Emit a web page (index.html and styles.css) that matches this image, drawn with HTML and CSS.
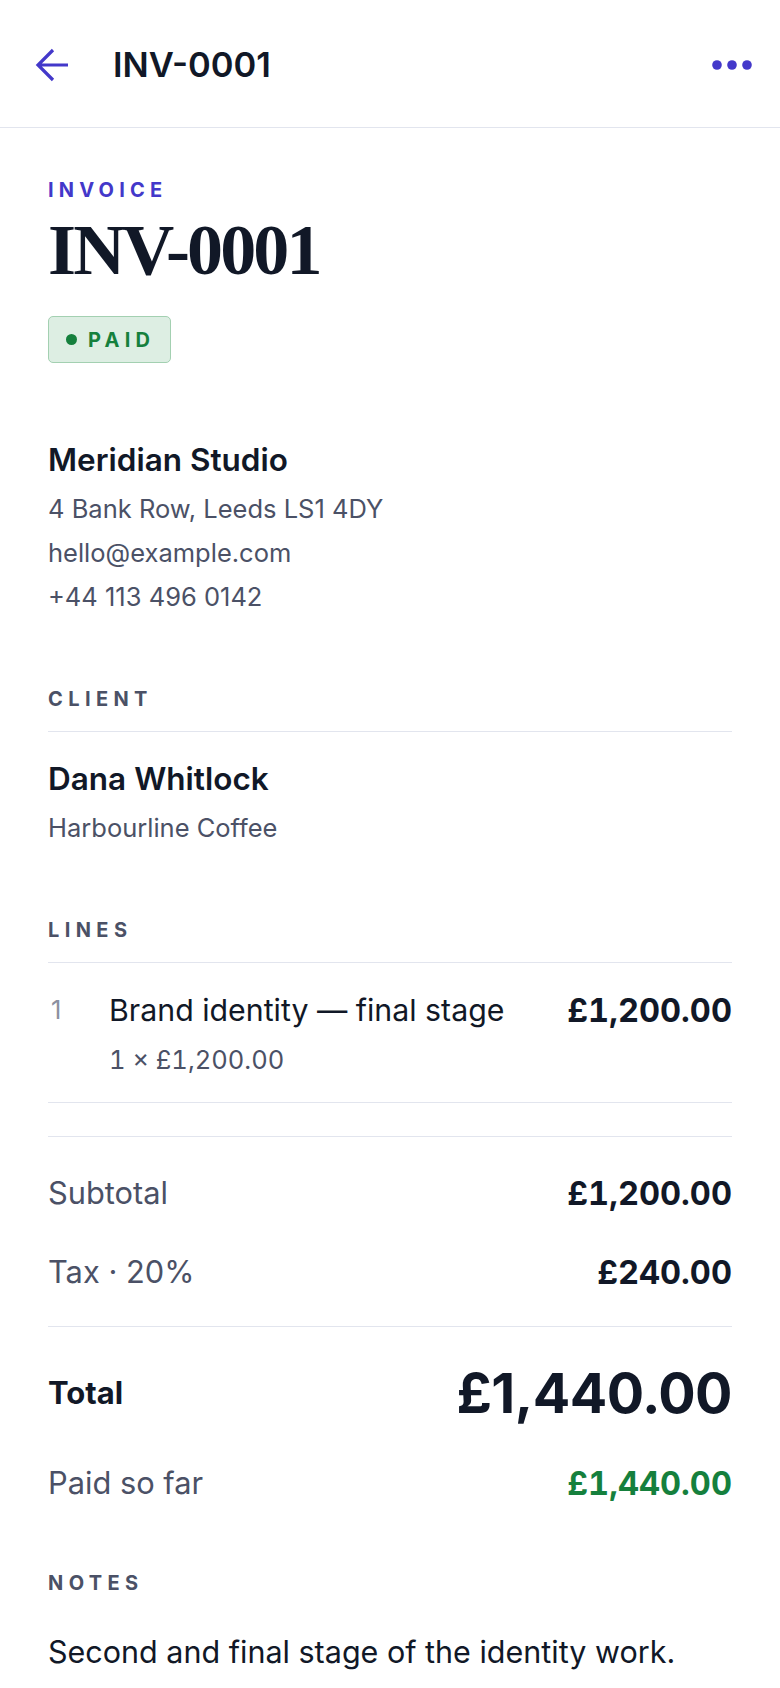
FILE: index.html
```html
<!DOCTYPE html>
<html lang="en">
<head>
<meta charset="utf-8">
<title>INV-0001</title>
<link rel="stylesheet" href="styles.css">
</head>
<body>
<header class="topbar">
  <svg class="back" width="34" height="34" viewBox="0 0 34 34" aria-hidden="true">
    <path d="M33 17H3M18 2L3 17L18 32" fill="none" stroke="#4338ca" stroke-width="3.2"/>
  </svg>
  <div class="title">INV-0001</div>
  <svg class="more" width="40" height="12" viewBox="0 0 40 12" aria-hidden="true">
    <circle cx="5" cy="6" r="4.8" fill="#4338ca"/>
    <circle cx="20" cy="6" r="4.8" fill="#4338ca"/>
    <circle cx="35" cy="6" r="4.8" fill="#4338ca"/>
  </svg>
</header>
<main class="content">
  <div class="eyebrow">INVOICE</div>
  <h1 class="heading">INV-0001</h1>
  <div class="badge"><span class="badge-dot"></span><span class="badge-text">PAID</span></div>

  <section class="from">
    <div class="name">Meridian Studio</div>
    <div class="muted first">4 Bank Row, Leeds LS1 4DY</div>
    <div class="muted">hello@example.com</div>
    <div class="muted">+44 113 496 0142</div>
  </section>

  <section class="section">
    <div class="label ruled">CLIENT</div>
    <div class="client">
      <div class="name">Dana Whitlock</div>
      <div class="muted second">Harbourline Coffee</div>
    </div>
  </section>

  <section class="section">
    <div class="label ruled">LINES</div>
    <div class="line">
      <div class="line-no">1</div>
      <div class="line-main">
        <div class="line-desc">Brand identity — final stage</div>
        <div class="line-sub">1 × £1,200.00</div>
      </div>
      <div class="amount">£1,200.00</div>
    </div>
  </section>

  <section class="totals">
    <div class="trow"><span class="tlabel">Subtotal</span><span class="amount">£1,200.00</span></div>
    <div class="trow"><span class="tlabel">Tax · 20%</span><span class="amount">£240.00</span></div>
  </section>

  <div class="grand"><span class="grand-label">Total</span><span class="grand-amount">£1,440.00</span></div>
  <div class="paid"><span class="tlabel">Paid so far</span><span class="amount green">£1,440.00</span></div>

  <section class="section">
    <div class="label">NOTES</div>
    <p class="notes">Second and final stage of the identity work.</p>
  </section>
</main>
</body>
</html>
```

FILE: styles.css
```css
* { box-sizing: border-box; margin: 0; padding: 0; }
html, body { background: #ffffff; }
body {
  font-family: Inter, "Noto Sans", sans-serif;
  color: #111827;
}
.topbar {
  height: 128px;
  padding: 2px 28px 0 35px;
  border-bottom: 1px solid #e2e5ee;
  display: flex;
  align-items: center;
}
.back { flex: none; display: block; }
.title {
  flex: 1;
  margin-left: 44px;
  font-size: 34.5px;
  line-height: 40px;
  font-weight: 600;
  color: #111827;
}
.more { flex: none; display: block; }

.content { padding: 50px 48px 0; }

.eyebrow {
  font-size: 20px;
  line-height: 24px;
  font-weight: 700;
  letter-spacing: 0.26em;
  color: #4338ca;
}
.heading {
  margin-top: 8px;
  font-family: "Liberation Serif", "Times New Roman", serif;
  font-size: 72px;
  line-height: 80px;
  font-weight: 700;
  letter-spacing: -0.04em;
  color: #111827;
}
.badge {
  margin-top: 26px;
  height: 47px;
  display: inline-flex;
  align-items: center;
  gap: 11px;
  padding: 0 15px 0 17px;
  background: #ddeee3;
  border: 1.5px solid #a3d0b1;
  border-radius: 5px;
}
.badge-dot {
  width: 11px;
  height: 11px;
  border-radius: 50%;
  background: #15803d;
}
.badge-text {
  font-size: 20px;
  line-height: 24px;
  font-weight: 700;
  letter-spacing: 0.26em;
  color: #15803d;
}

.from { margin-top: 77px; }
.name {
  font-size: 31.5px;
  line-height: 40px;
  font-weight: 600;
  color: #111827;
}
.muted {
  font-size: 25.5px;
  line-height: 44px;
  color: #4b5166;
}
.muted.first { margin-top: 7px; }
.muted.second { margin-top: 7px; }

.section { margin-top: 68px; }
.label {
  font-size: 20px;
  line-height: 24px;
  font-weight: 700;
  letter-spacing: 0.27em;
  color: #4b5166;
}
.label.ruled {
  padding-bottom: 20px;
  border-bottom: 1px solid #e2e5ee;
}
.client { padding-top: 27px; }

.line {
  display: flex;
  align-items: flex-start;
  padding: 27px 0 22px;
  border-bottom: 1px solid #e2e5ee;
}
.line-no {
  width: 61px;
  flex: none;
  padding-left: 3px;
  font-size: 25.5px;
  line-height: 40px;
  color: #8b90a0;
}
.line-main { flex: 1; }
.line-desc {
  font-size: 30.3px;
  line-height: 40px;
  color: #111827;
}
.line-sub {
  margin-top: 10px;
  font-size: 25.5px;
  line-height: 40px;
  color: #4b5166;
  font-variant-numeric: tabular-nums;
}
.amount {
  font-size: 32.6px;
  line-height: 40px;
  font-weight: 700;
  color: #111827;
  font-variant-numeric: tabular-nums;
}
.amount.green { color: #15803d; }

.totals {
  margin-top: 33px;
  padding: 16px 0 15px;
  border-top: 1px solid #e2e5ee;
  border-bottom: 1px solid #e2e5ee;
}
.trow {
  height: 79px;
  display: flex;
  align-items: center;
  justify-content: space-between;
}
.tlabel {
  font-size: 30.8px;
  line-height: 40px;
  color: #4b5166;
}
.grand {
  margin-top: 34px;
  height: 64px;
  display: flex;
  align-items: center;
  justify-content: space-between;
}
.grand-label {
  font-size: 31px;
  line-height: 40px;
  font-weight: 700;
}
.grand-amount {
  font-size: 55.5px;
  line-height: 64px;
  font-weight: 700;
  letter-spacing: -0.01em;
}
.paid {
  margin-top: 38px;
  height: 40px;
  display: flex;
  align-items: center;
  justify-content: space-between;
}
.notes {
  margin-top: 37px;
  font-size: 30.5px;
  line-height: 40px;
  color: #111827;
}
```
